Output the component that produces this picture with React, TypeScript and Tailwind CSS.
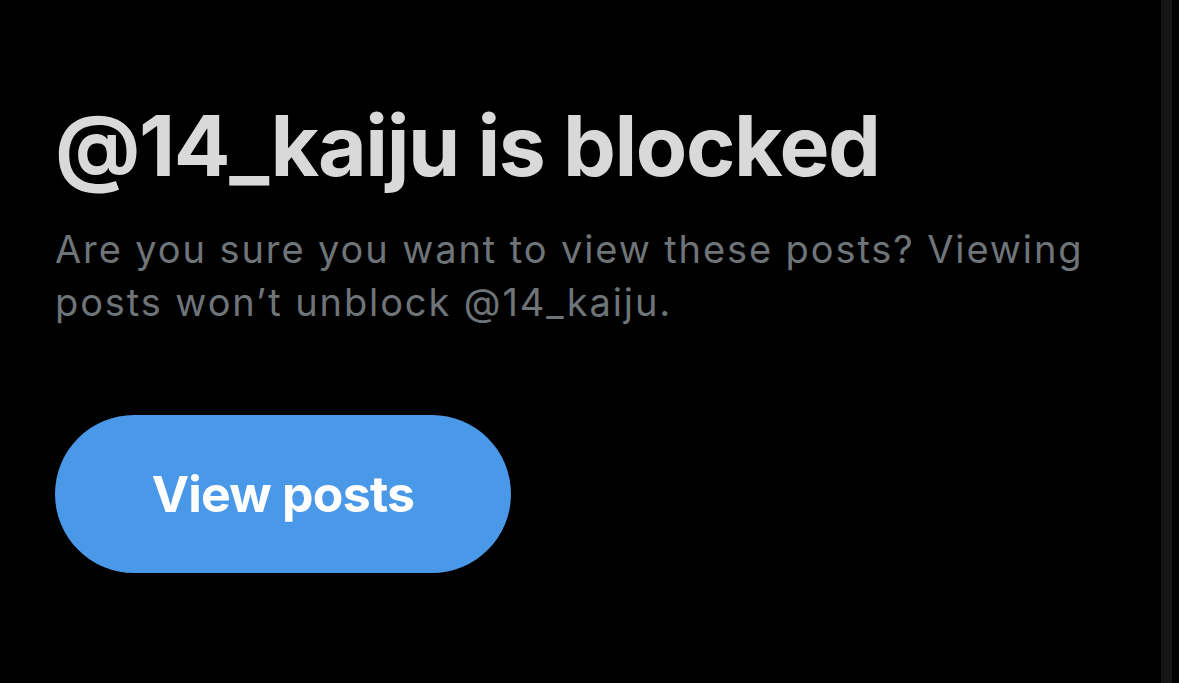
export default function App() {
  return (
    <div className="flex h-[683px] w-[1179px] bg-black" style={{ fontFamily: 'Inter, "Noto Sans", sans-serif' }}>
      <main className="flex flex-1 flex-col pl-[55px] pt-[96px]">
        <h1 className="text-[84px] font-bold leading-[100px] tracking-[-1.4px] text-[#d9d9d9]">
          @14_kaiju is blocked
        </h1>
        <p className="mt-[27px] w-[1060px] text-[38px] leading-[53px] tracking-[1.9px] text-[#6f7479]">
          Are you sure you want to view these posts? Viewing posts won’t unblock @14_kaiju.
        </p>
        <div className="mt-[86px]">
          <button className="flex h-[158px] w-[456px] items-center justify-center rounded-full bg-[#4a99e9] text-[50px] font-bold tracking-[-0.8px] text-white">
            View posts
          </button>
        </div>
      </main>
      <div className="w-[7px] bg-black" />
      <div className="w-[11px] bg-[#151515]" />
      <div className="w-[7px] bg-black" />
    </div>
  );
}
